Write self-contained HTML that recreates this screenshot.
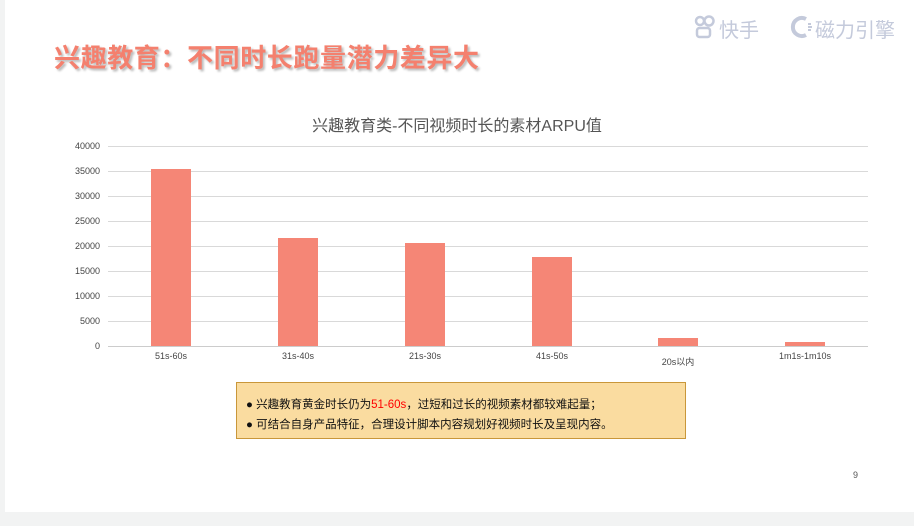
<!DOCTYPE html>
<html><head><meta charset="utf-8"><style>
body{margin:0;width:914px;height:526px;background:#f2f3f3;position:relative;overflow:hidden;font-family:"Liberation Sans","Noto Sans CJK SC",sans-serif}
.slide{position:absolute;left:5px;top:0;width:909px;height:512px;background:#fff}
.t{position:absolute;left:54px;top:38px;font-size:26px;font-weight:bold;color:#f4806e;text-shadow:2px 2px 2px #bbb;letter-spacing:0.6px;white-space:nowrap}
.logo{position:absolute;top:14px;font-size:20px;color:#c4cadb;white-space:nowrap}
.ct{position:absolute;left:0;width:914px;top:112px;text-align:center;font-size:16px;color:#555}
.yl{position:absolute;left:50px;width:50px;text-align:right;font-size:9px;color:#444}
.g{position:absolute;left:108px;width:760px;height:1px;background:#d9d9d9}
.bar{position:absolute;width:40px;background:#f58676}
.xl{position:absolute;font-size:9px;color:#444;width:100px;text-align:center}
.box{position:absolute;left:236px;top:382px;width:448px;height:55px;background:#fadca0;border:1px solid #c9973a}
.box div{position:absolute;left:9px;font-size:11.5px;color:#111;white-space:nowrap}
</style></head><body>
<div class="slide"></div>
<div class="t">兴趣教育：不同时长跑量潜力差异大</div>
<svg style="position:absolute;left:694px;top:15px" width="22" height="24" viewBox="0 0 22 24" fill="none" stroke="#c4cadb" stroke-width="2.5"><circle cx="6" cy="6" r="4"/><circle cx="15" cy="6" r="4.5"/><rect x="3" y="13" width="13" height="9" rx="2.5"/></svg>
<div class="logo" style="left:719px">快手</div>
<svg style="position:absolute;left:788px;top:14px" width="26" height="26" viewBox="0 0 26 26" fill="none" stroke="#c4cadb" stroke-width="4"><path d="M18 5A9 9 0 1 0 18 21"/><path d="M20 10h3M20 13h4M20 16h3" stroke-width="2"/></svg>
<div class="logo" style="left:815px">磁力引擎</div>
<div class="ct">兴趣教育类-不同视频时长的素材ARPU值</div>
<div class="yl" style="top:141px">40000</div><div class="g" style="top:146px"></div>
<div class="yl" style="top:166px">35000</div><div class="g" style="top:171px"></div>
<div class="yl" style="top:191px">30000</div><div class="g" style="top:196px"></div>
<div class="yl" style="top:216px">25000</div><div class="g" style="top:221px"></div>
<div class="yl" style="top:241px">20000</div><div class="g" style="top:246px"></div>
<div class="yl" style="top:266px">15000</div><div class="g" style="top:271px"></div>
<div class="yl" style="top:291px">10000</div><div class="g" style="top:296px"></div>
<div class="yl" style="top:316px">5000</div><div class="g" style="top:321px"></div>
<div class="yl" style="top:341px">0</div>
<div class="bar" style="left:151px;top:169px;height:177px"></div>
<div class="bar" style="left:278px;top:238px;height:108px"></div>
<div class="bar" style="left:405px;top:243px;height:103px"></div>
<div class="bar" style="left:532px;top:257px;height:89px"></div>
<div class="bar" style="left:658px;top:338px;height:8px"></div>
<div class="bar" style="left:785px;top:342px;height:4px"></div>
<div class="g" style="top:346px;background:#ccc"></div>
<div class="xl" style="left:121px;top:351px">51s-60s</div>
<div class="xl" style="left:248px;top:351px">31s-40s</div>
<div class="xl" style="left:375px;top:351px">21s-30s</div>
<div class="xl" style="left:502px;top:351px">41s-50s</div>
<div class="xl" style="left:628px;top:355px">20s以内</div>
<div class="xl" style="left:755px;top:351px">1m1s-1m10s</div>
<div class="box">
<div style="top:13px">●&nbsp;兴趣教育黄金时长仍为<span style="color:#f00">51-60s</span>，过短和过长的视频素材都较难起量；</div>
<div style="top:33px">●&nbsp;可结合自身产品特征，合理设计脚本内容规划好视频时长及呈现内容。</div>
</div>
<div style="position:absolute;left:853px;top:470px;font-size:9px;color:#555">9</div>
</body></html>
